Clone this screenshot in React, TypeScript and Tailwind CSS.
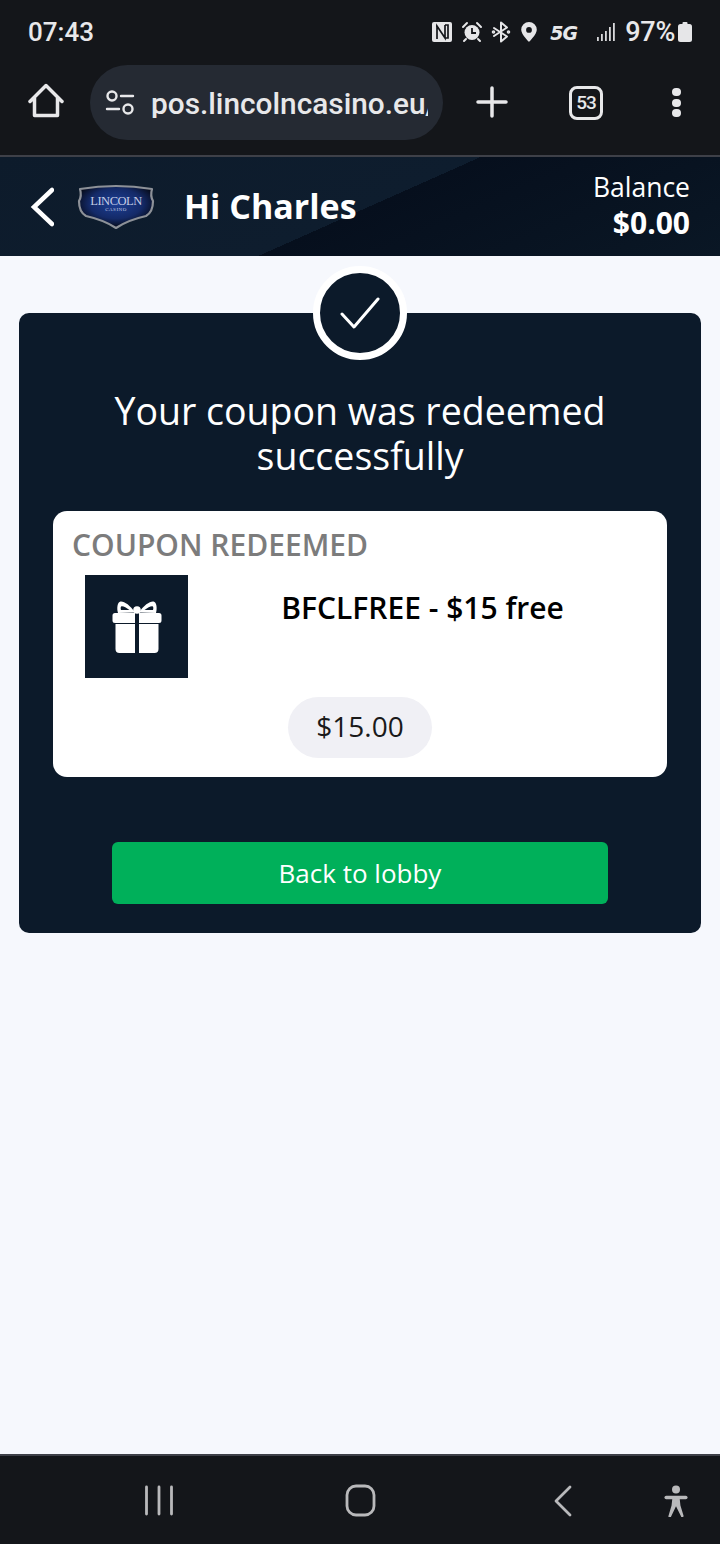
import React from "react";

const roboto = "font-['Roboto',sans-serif]";

function Nfc() {
  return (
    <svg width="22" height="22" viewBox="0 0 22 22">
      <rect x="1" y="1" width="20" height="20" rx="2" fill="#e6e6e8" />
      <path d="M6 18V5l8 12V4M6 5h-1M14 17h3V4h-3" fill="none" stroke="#14161a" strokeWidth="1.700" />
    </svg>
  );
}
function Alarm() {
  return (
    <svg width="22" height="22" viewBox="0 0 22 22" fill="none">
      <circle cx="11" cy="11.500" r="7.500" fill="#e6e6e8" />
      <path d="M11 7v5h4" stroke="#14161a" strokeWidth="1.800" />
      <path d="M2 6l4-4M20 6l-4-4M5 18l-2 2M17 18l2 2" stroke="#e6e6e8" strokeWidth="2" strokeLinecap="round" />
    </svg>
  );
}
function Bluetooth() {
  return (
    <svg width="20" height="22" viewBox="0 0 20 22" fill="none" stroke="#e6e6e8" strokeWidth="2" strokeLinecap="round" strokeLinejoin="round">
      <path d="M3 7l13 8.500-6 5V1.500l6 5L3 15" />
      <circle cx="2.500" cy="11" r="0.800" />
      <circle cx="17.500" cy="11" r="0.800" />
    </svg>
  );
}
function Pin() {
  return (
    <svg width="18" height="22" viewBox="0 0 18 22">
      <path fillRule="evenodd" d="M9 1a7.800 7.800 0 0 1 7.800 7.800C16.800 13.500 9 21 9 21S1.200 13.500 1.200 8.800A7.800 7.800 0 0 1 9 1zm0 5a2.900 2.900 0 1 0 0 5.800A2.900 2.900 0 0 0 9 6z" fill="#e6e6e8" />
    </svg>
  );
}
function Signal() {
  return (
    <svg width="18" height="20" viewBox="0 0 18 20" fill="#d8d8da">
      <rect x="0" y="15" width="1.800" height="4" />
      <rect x="4" y="12" width="1.800" height="7" />
      <rect x="8" y="9" width="1.800" height="10" />
      <rect x="12" y="5" width="1.800" height="14" />
      <rect x="16" y="1" width="1.800" height="18" />
    </svg>
  );
}
function Battery() {
  return (
    <svg width="14" height="20" viewBox="0 0 14 20" fill="#e6e6e8">
      <rect x="4.500" y="0" width="5" height="3" rx="1" />
      <rect x="0" y="2" width="14" height="18" rx="2.500" />
    </svg>
  );
}

function StatusBar() {
  return (
    <div className={`flex h-[62px] items-center justify-between pl-[28px] pr-[28px] pt-[2px] ${roboto} text-[#e8e8ea]`}>
      <span className="text-[26px] font-medium leading-none">07:43</span>
      <div className="flex items-center">
        <Nfc />
        <span className="ml-[8px] flex"><Alarm /></span>
        <span className="ml-[8px] flex"><Bluetooth /></span>
        <span className="ml-[9px] flex"><Pin /></span>
        <span className="ml-[12px] w-[28px] pt-[2px] font-['DejaVu_Sans',sans-serif] text-[19px] font-bold italic leading-none tracking-[-1px]">5G</span>
        <span className="ml-[19px] flex"><Signal /></span>
        <span className="ml-[10px] text-[27px] font-medium leading-none tracking-[-0.3px]">97%</span>
        <span className="ml-[3px] flex"><Battery /></span>
      </div>
    </div>
  );
}

function Toolbar() {
  return (
    <div className="flex h-[93px] items-start pl-[28px]">
      <svg className="mt-[21px]" width="36" height="36" viewBox="0 0 36 36" fill="none" stroke="#e8e8ea" strokeWidth="3.500" strokeLinejoin="round" strokeLinecap="round">
        <path d="M2 18.500 18 2.500l16 16M6.500 15v17.500h23V15" />
      </svg>
      <div className={`ml-[26px] mt-[3px] flex h-[75px] w-[353px] items-center rounded-full bg-[#252a33] pl-[15px] ${roboto}`}>
        <svg width="30" height="26" viewBox="0 0 30 26" fill="none" stroke="#e8e8ea" strokeWidth="2.400" strokeLinecap="round">
          <circle cx="7" cy="6" r="4.500" />
          <path d="M16 6h12M2 19h12" />
          <circle cx="23" cy="19" r="4.500" />
        </svg>
        <div className="ml-[16px] w-[277px] overflow-hidden whitespace-nowrap pt-[2px] text-[29.800px] font-medium leading-none text-[#e8e8ea]">
          pos.lincolncasino.eu/
        </div>
      </div>
      <svg className="ml-[33px] mt-[24px]" width="32" height="32" viewBox="0 0 32 32" stroke="#e8e8ea" strokeWidth="3.500" strokeLinecap="round">
        <path d="M16 2v28M2 16h28" />
      </svg>
      <div className={`ml-[61px] mt-[24px] flex h-[34px] w-[34px] items-center justify-center rounded-[8px] border-[3px] border-[#e8e8ea] text-[19px] font-medium tracking-[-1px] text-[#e8e8ea] ${roboto}`}>
        53
      </div>
      <div className="ml-[69px] mt-[26px] flex flex-col gap-[2.500px]">
        <span className="h-[8px] w-[9px] rounded-full bg-[#e8e8ea]" />
        <span className="h-[8px] w-[9px] rounded-full bg-[#e8e8ea]" />
        <span className="h-[8px] w-[9px] rounded-full bg-[#e8e8ea]" />
      </div>
    </div>
  );
}

function Logo() {
  return (
    <div className="relative ml-[22px] flex h-[46px] w-[80px] items-center justify-center">
      <svg className="absolute inset-0" width="80" height="46" viewBox="0 0 80 46">
        <defs>
          <radialGradient id="sh" cx="50%" cy="42%" r="55%">
            <stop offset="0%" stopColor="#1d3f96" />
            <stop offset="65%" stopColor="#142a68" />
            <stop offset="100%" stopColor="#070d1e" />
          </radialGradient>
        </defs>
        <path d="M4 5Q22 2 40 2Q58 2 76 5Q74 12 77 17Q77 28 70 32Q52 36 40 44Q28 36 10 32Q3 28 3 17Q6 12 4 5z" fill="url(#sh)" stroke="#8d9198" strokeWidth="2.200" strokeLinejoin="round" />
      </svg>
      <div className="relative mb-[5px] flex flex-col items-center font-['Liberation_Serif',serif] leading-none text-[#c5cde4]">
        <span className="text-[12.500px] leading-[12px] tracking-[-0.5px]">LINCOLN</span>
        <span className="text-[5px] leading-[6px] tracking-[0.5px]">CASINO</span>
      </div>
    </div>
  );
}

function SiteHeader() {
  return (
    <div className="flex h-[99px] items-center bg-[linear-gradient(156deg,#0d1b2b_0%,#0e1d2e_51%,#060f1d_51%,#0a1725_100%)] pl-[30px] pr-[30px] font-['Open_Sans',sans-serif] text-white">
      <svg width="24" height="40" viewBox="0 0 24 40" fill="none" stroke="#fff" strokeWidth="4.500" strokeLinecap="round">
        <path d="M22 3 4 20l18 17" />
      </svg>
      <Logo />
      <span className="ml-[28px] pb-[2px] text-[34px] font-bold leading-none">Hi Charles</span>
      <div className="ml-auto flex flex-col items-end">
        <span className="text-[26.500px] leading-[32px]">Balance</span>
        <span className="text-[30px] font-bold leading-[40px]">$0.00</span>
      </div>
    </div>
  );
}

function Gift() {
  return (
    <svg width="50" height="54" viewBox="0 0 50 54" fill="#fff">
      <path fillRule="evenodd" d="M23 12.500C18 5 12 1 8.500 1.500 5.500 2 4.500 8 6 13zM17.500 10C14 7.500 11.500 6 9.500 6.300c-1 .5-1 2.500-.5 3.700z" />
      <path fillRule="evenodd" d="M27 12.500C32 5 38 1 41.500 1.500 44.500 2 45.500 8 44 13zM32.500 10C36 7.500 38.500 6 40.500 6.300c1 .5 1 2.500.5 3.700z" />
      <circle cx="25" cy="10" r="3.800" />
      <path d="M3 13h20v10H3a2.500 2.500 0 0 1-2.500-2.500v-5A2.500 2.500 0 0 1 3 13zM27 13h20a2.500 2.500 0 0 1 2.500 2.500v5A2.500 2.500 0 0 1 47 23H27z" />
      <path d="M3.500 24H23v29H7.500a4 4 0 0 1-4-4zM27 24h19.500v25a4 4 0 0 1-4 4H27z" />
    </svg>
  );
}

function CouponCard() {
  return (
    <div className="mx-[34px] mt-[33px] rounded-[14px] bg-white pb-[19px] pt-[16px] font-['Open_Sans',sans-serif]">
      <div className="pl-[19px] text-[30px] font-semibold leading-[36px] text-[#7c7c7c]">COUPON REDEEMED</div>
      <div className="mt-[12px] flex pl-[32px]">
        <div className="flex h-[103px] w-[103px] items-center justify-center bg-[#0c1a2a]">
          <Gift />
        </div>
        <div className="flex-1 pr-[10px] pt-[13px] text-center text-[30px] font-semibold leading-[40px] text-black">
          BFCLFREE - $15 free
        </div>
      </div>
      <div className="mt-[19px] flex justify-center">
        <div className="flex h-[61px] w-[144px] items-center justify-center rounded-full bg-[#f0f0f5] pb-[3px] text-[28px] text-[#1a1a1a]">
          $15.00
        </div>
      </div>
    </div>
  );
}

function Main() {
  return (
    <main className="flex-1 bg-[#f6f8fd] px-[19px] pt-[57px]">
      <div className="relative h-[620px] rounded-[10px] bg-[#0c1a2a] pt-[75px] font-['Open_Sans',sans-serif]">
        <div className="absolute left-1/2 top-[-47px] flex h-[94px] w-[94px] -translate-x-1/2 items-center justify-center rounded-full border-[7px] border-white bg-[#0c1a2a]">
          <svg width="40" height="32" viewBox="0 0 40 32" fill="none" stroke="#fff" strokeWidth="3" strokeLinecap="round" strokeLinejoin="round">
            <path d="M2 17l12 13L38 2" />
          </svg>
        </div>
        <h1 className="text-center text-[37.500px] font-normal leading-[45px] text-white">
          Your coupon was redeemed
          <br />
          successfully
        </h1>
        <CouponCard />
        <div className="mt-[65px] flex justify-center">
          <button className="flex h-[62px] w-[496px] items-center justify-center rounded-[6px] bg-[#00b05a] text-[26px] text-white">
            Back to lobby
          </button>
        </div>
      </div>
    </main>
  );
}

function NavBar() {
  return (
    <div className="relative flex h-[90px] shrink-0 items-start border-t-[2px] border-[#3e4048] bg-[#14161a]">
      <svg className="ml-[144px] mt-[29px]" width="30" height="31" viewBox="0 0 30 31" stroke="#b9b9bb" strokeWidth="2.800" strokeLinecap="round">
        <path d="M2.500 2v27M15 2v27M27.500 2v27" />
      </svg>
      <svg className="ml-[171px] mt-[28px]" width="32" height="33" viewBox="0 0 32 33" fill="none" stroke="#b9b9bb" strokeWidth="2.800">
        <rect x="2" y="2" width="27" height="29" rx="9" />
      </svg>
      <svg className="ml-[176px] mt-[29px]" width="20" height="32" viewBox="0 0 20 32" fill="none" stroke="#b9b9bb" strokeWidth="2.800" strokeLinecap="round" strokeLinejoin="round">
        <path d="M17 2 3 16l14 14" />
      </svg>
      <svg className="ml-[90px] mt-[29px]" width="26" height="32" viewBox="0 0 28 36" fill="#b9b9bb">
        <circle cx="14" cy="5" r="4.500" />
        <rect x="1" y="12" width="26" height="4" rx="2" />
        <path d="M10 14h8l1 9 3.500 11.500a1.500 1.500 0 0 1-3 .5L14 24l-5.500 11.500a1.500 1.500 0 0 1-3-.5L9 23z" />
      </svg>
    </div>
  );
}

export default function App() {
  return (
    <div className="flex h-[1544px] w-[720px] flex-col overflow-hidden bg-[#14161a]">
      <StatusBar />
      <Toolbar />
      <div className="h-[2px] bg-[#3e4048]" />
      <SiteHeader />
      <Main />
      <NavBar />
    </div>
  );
}
